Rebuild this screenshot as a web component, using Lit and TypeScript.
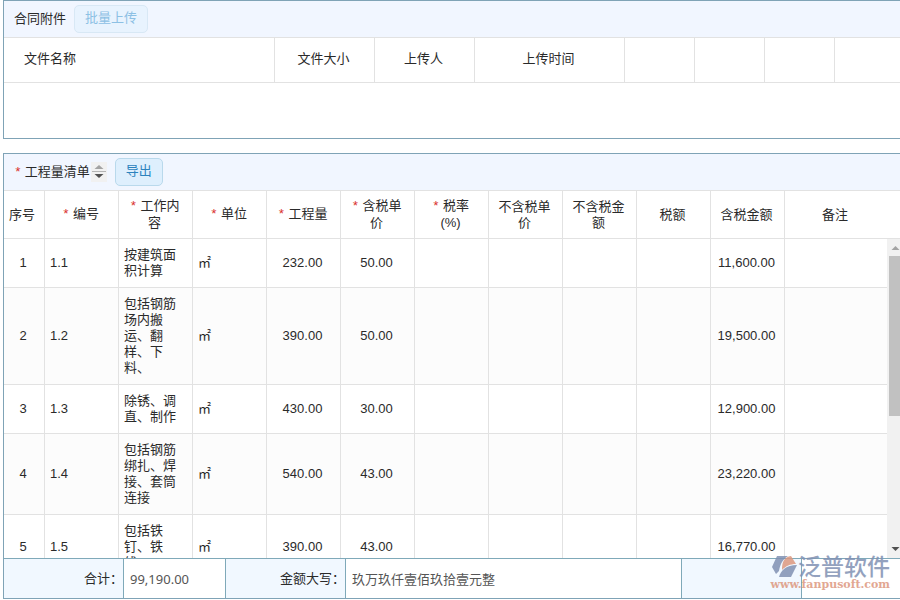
import { LitElement, html, css } from "lit";
import { customElement, property } from "lit/decorators.js";

interface Column {
  label: string;
  key?: string;
  required?: boolean;
  align?: "left" | "center";
}

const fileColumns = ["文件名称", "文件大小", "上传人", "上传时间", "", "", "", ""];

const columns: Column[] = [
  { label: "序号", key: "index", align: "center" },
  { label: "编号", key: "code", required: true, align: "left" },
  { label: "工作内容", key: "content", required: true, align: "left" },
  { label: "单位", key: "unit", required: true, align: "left" },
  { label: "工程量", key: "quantity", required: true, align: "center" },
  { label: "含税单价", key: "price", required: true, align: "center" },
  { label: "税率(%)", required: true },
  { label: "不含税单价" },
  { label: "不含税金额" },
  { label: "税额" },
  { label: "含税金额", key: "total", align: "center" },
  { label: "备注" },
];

const rows: Record<string, string>[] = [
  { index: "1", code: "1.1", content: "按建筑面积计算", unit: "㎡", quantity: "232.00", price: "50.00", total: "11,600.00" },
  { index: "2", code: "1.2", content: "包括钢筋场内搬运、翻样、下料、", unit: "㎡", quantity: "390.00", price: "50.00", total: "19,500.00" },
  { index: "3", code: "1.3", content: "除锈、调直、制作", unit: "㎡", quantity: "430.00", price: "30.00", total: "12,900.00" },
  { index: "4", code: "1.4", content: "包括钢筋绑扎、焊接、套筒连接", unit: "㎡", quantity: "540.00", price: "43.00", total: "23,220.00" },
  { index: "5", code: "1.5", content: "包括铁钉、铁线、", unit: "㎡", quantity: "390.00", price: "43.00", total: "16,770.00" },
];

const shared = css`
  * {
    box-sizing: border-box;
  }
  .panel {
    border: 1px solid #7fa3b6;
    background: #fff;
  }
  .bar {
    display: flex;
    align-items: center;
    gap: 8px;
    height: 37px;
    padding: 0 10px;
    background: #f1f6ff;
    border-bottom: 1px solid #e2e2e2;
  }
  .btn {
    height: 28px;
    padding: 0 10px 2px;
    border: 1px solid #b9d9ec;
    border-radius: 5px;
    background: #deeffd;
    color: #2d83bd;
    font: inherit;
  }
  .btn:disabled {
    border-color: #d8e8f5;
    background: #e8f3fe;
    color: #8cc0e4;
  }
  table {
    width: 100%;
    table-layout: fixed;
    border-spacing: 0;
  }
  th,
  td {
    border-right: 1px solid #e2e2e2;
    border-bottom: 1px solid #e2e2e2;
    font-weight: 400;
  }
  th:last-child,
  td:last-child {
    border-right: 0;
  }
  .req {
    color: #d9302c;
    margin-right: 3px;
    font-family: "Liberation Mono", monospace;
  }
`;

@customElement("attachment-panel")
export class AttachmentPanel extends LitElement {
  static styles = [
    shared,
    css`
      :host {
        display: block;
      }
      .panel {
        min-height: 139px;
      }
      th {
        height: 45px;
        padding: 0 2px 2px 0;
      }
      th:first-child {
        text-align: left;
        padding-left: 20px;
      }
      .c-name {
        width: 271px;
      }
      .c-mid {
        width: 100px;
      }
      .c-time {
        width: 150px;
      }
      .c-act {
        width: 70px;
      }
    `,
  ];

  render() {
    return html`
      <section class="panel">
        <div class="bar">
          <span>合同附件</span>
          <button class="btn" disabled>批量上传</button>
        </div>
        <table>
          <colgroup>
            <col class="c-name" />
            <col class="c-mid" />
            <col class="c-mid" />
            <col class="c-time" />
            <col class="c-act" />
            <col class="c-act" />
            <col class="c-act" />
            <col />
          </colgroup>
          <thead>
            <tr>
              ${fileColumns.map((c) => html`<th scope="col">${c}</th>`)}
            </tr>
          </thead>
        </table>
      </section>
    `;
  }
}

@customElement("scroll-rail")
export class ScrollRail extends LitElement {
  static styles = css`
    :host {
      display: flex;
      flex-direction: column;
      flex: none;
      width: 17px;
      background: #f1f1f1;
    }
    .arrow {
      display: block;
      flex: none;
      width: 17px;
      height: 17px;
    }
    .track {
      flex: 1;
      min-height: 0;
      padding-left: 2px;
    }
    .thumb {
      height: 56%;
      background: #c1c1c1;
    }
  `;

  render() {
    return html`
      <svg class="arrow" viewBox="0 0 17 17"><path d="M4.500 11h8L8.500 7z" fill="#a3a3a3" /></svg>
      <div class="track"><div class="thumb"></div></div>
      <svg class="arrow" viewBox="0 0 17 17"><path d="M4.500 6h8L8.500 10z" fill="#505050" /></svg>
    `;
  }
}

@customElement("quantity-panel")
export class QuantityPanel extends LitElement {
  @property({ attribute: false }) rows = rows;

  static styles = [
    shared,
    css`
      :host {
        display: flex;
        min-height: 0;
      }
      .panel {
        flex: 1;
        min-width: 0;
        display: flex;
        flex-direction: column;
      }
      .bar,
      .head,
      .totals {
        flex: none;
      }
      .title {
        display: flex;
        align-items: center;
        gap: 1px;
      }
      .sort {
        display: block;
        width: 16px;
        height: 20px;
        padding: 0;
        border: 0;
        background: #f1f1f1;
      }
      .sort svg {
        display: block;
      }
      .head {
        padding-right: 17px;
        border-bottom: 1px solid #e2e2e2;
      }
      .head th {
        height: 47px;
        padding: 0 11px 0 9px;
        border-bottom: 0;
        line-height: 16px;
      }
      .head th:first-child {
        padding: 0 4px 0 0;
      }
      .c-index {
        width: 41px;
      }
      .c-data {
        width: 74px;
      }
      .scroller {
        flex: 1;
        min-height: 0;
        display: flex;
      }
      .view {
        flex: 1;
        min-width: 0;
        overflow-y: auto;
        scrollbar-width: none;
      }
      td {
        padding: 8px 7px 8px 5px;
        line-height: 16px;
        text-align: center;
      }
      td.left {
        text-align: left;
      }
      tbody tr:nth-child(even) td {
        background: #fcfcfc;
      }
      .totals {
        display: grid;
        grid-template-columns: 120px 102px 120px 336px 120px 1fr;
        height: 40px;
        border-top: 1px solid #7fa9b9;
      }
      .totals label,
      .totals .blank {
        display: flex;
        align-items: center;
        justify-content: flex-end;
        background: #f1f8ff;
        border-right: 1px solid #7fa9b9;
      }
      .totals input {
        min-width: 0;
        width: 100%;
        padding: 0 6px;
        border: 0;
        border-right: 1px solid #7fa9b9;
        background: #fff;
        color: #555;
        font: 13px "Noto Sans", "Noto Sans CJK SC", sans-serif;
        outline: 0;
      }
    `,
  ];

  private cols() {
    return html`<colgroup>
      <col class="c-index" />
      ${columns.slice(1, -1).map(() => html`<col class="c-data" />`)}
      <col />
    </colgroup>`;
  }

  render() {
    return html`
      <section class="panel">
        <div class="bar">
          <span class="title">
            <span><span class="req">*</span>工程量清单</span>
            <button class="sort" aria-label="排序">
              <svg width="16" height="20" viewBox="0 0 16 20">
                <path d="M3.500 7h9L8 3z" fill="#a3a3a3" />
                <path d="M1 9h14v1H1z" fill="#b4b4b4" />
                <path d="M3.500 12h9L8 16z" fill="#505050" />
              </svg>
            </button>
          </span>
          <button class="btn">导出</button>
        </div>
        <div class="head">
          <table>
            ${this.cols()}
            <thead>
              <tr>
                ${columns.map(
                  (c) => html`<th scope="col">${c.required ? html`<span class="req">*</span>` : ""}${c.label}</th>`
                )}
              </tr>
            </thead>
          </table>
        </div>
        <div class="scroller">
          <div class="view">
            <table>
              ${this.cols()}
              <tbody>
                ${this.rows.map(
                  (r) => html`<tr>
                    ${columns.map((c) => html`<td class=${c.align ?? "center"}>${c.key ? r[c.key] : ""}</td>`)}
                  </tr>`
                )}
              </tbody>
            </table>
          </div>
          <scroll-rail></scroll-rail>
        </div>
        <div class="totals">
          <label for="sum">合计：</label>
          <input id="sum" readonly value="99,190.00" />
          <label for="words">金额大写：</label>
          <input id="words" readonly value="玖万玖仟壹佰玖拾壹元整" />
          <div class="blank"></div>
        </div>
      </section>
    `;
  }
}

@customElement("brand-mark")
export class BrandMark extends LitElement {
  static styles = css`
    :host {
      position: absolute;
      right: 10px;
      bottom: 9px;
      display: flex;
      flex-direction: column;
      align-items: flex-end;
      opacity: 0.85;
    }
    .row {
      display: flex;
      align-items: center;
      height: 24px;
    }
    .name {
      color: #8191b3;
      font-size: 23px;
      font-weight: 500;
      line-height: 24px;
    }
    .site {
      color: #dd987f;
      font: bold 11px/12px "DejaVu Serif", serif;
      white-space: nowrap;
    }
  `;

  render() {
    return html`
      <div class="row">
        <svg width="26" height="24" viewBox="0 0 26 24">
          <path d="M5 1h11C11 4 8 9 7 16L4 19L0 12z" fill="#8191b3" />
          <path d="M10 15C10 7 12 2 19 1L24 9C18 9 14 11 10 15z" fill="#dd987f" />
          <path d="M7 22C9 15 14 10 25 10L19 22z" fill="#8191b3" />
        </svg>
        <span class="name">泛普软件</span>
      </div>
      <span class="site">www.fanpusoft.com</span>
    `;
  }
}

@customElement("app-root")
export class AppRoot extends LitElement {
  static styles = css`
    :host {
      position: relative;
      display: block;
      overflow: hidden;
      background: #fff;
      color: #2a2a2a;
      font: 13px/20px "Liberation Sans", "Noto Sans CJK SC", sans-serif;
    }
    .page {
      box-sizing: border-box;
      display: flex;
      flex-direction: column;
      gap: 14px;
      height: 100vh;
      padding-bottom: 1px;
      margin: 0 -5px 0 3px;
    }
    attachment-panel {
      flex: none;
    }
    quantity-panel {
      flex: 1;
    }
  `;

  render() {
    return html`
      <main class="page">
        <attachment-panel></attachment-panel>
        <quantity-panel></quantity-panel>
      </main>
      <brand-mark></brand-mark>
    `;
  }
}
